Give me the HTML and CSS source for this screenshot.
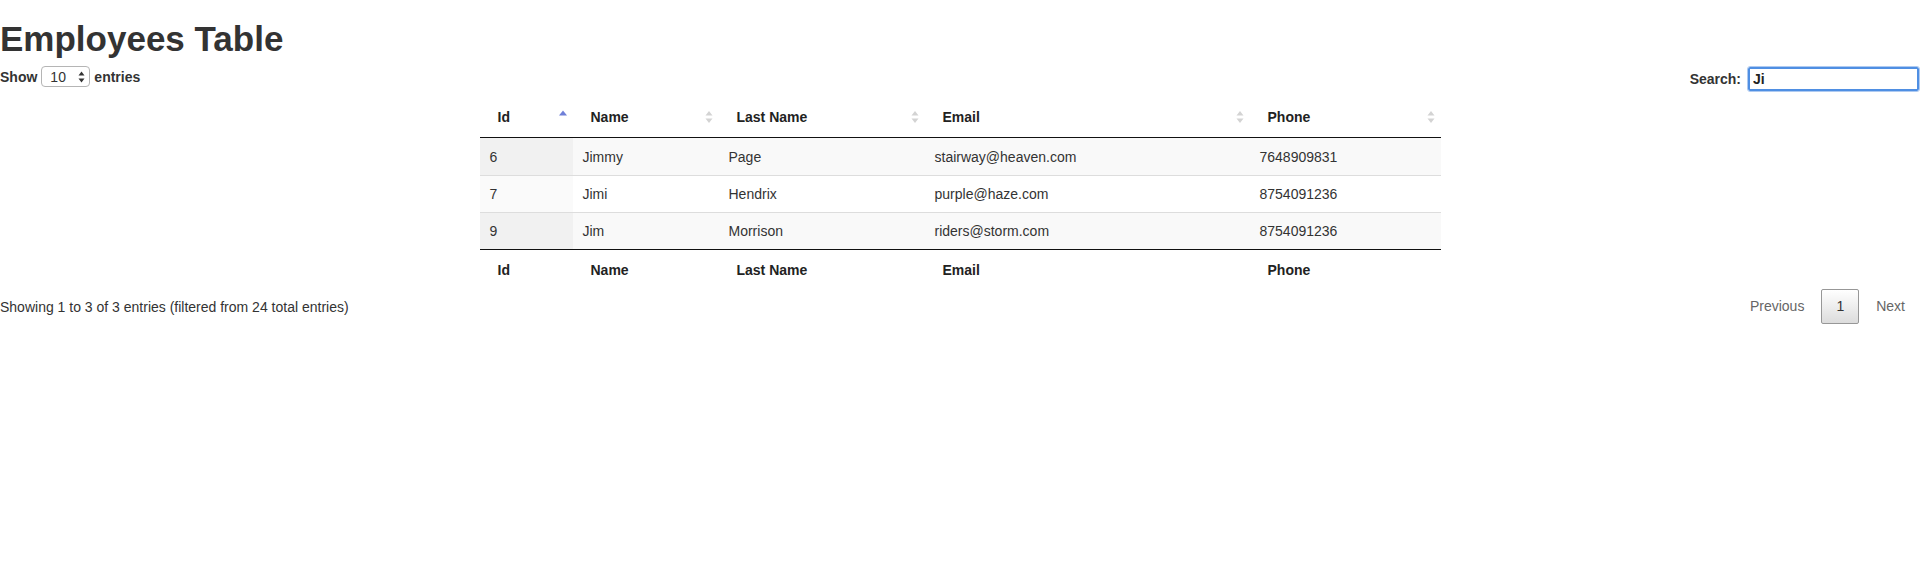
FILE: index.html
```html
<!DOCTYPE html>
<html>
<head>
<meta charset="utf-8">
<title>Employees Table</title>
<link rel="stylesheet" href="styles.css">
</head>
<body>
<h1 class="title">Employees Table</h1>
<div class="controls">
  <div class="length">
    <span>Show</span>
    <span class="select-wrap">
      <select class="select"><option>10</option></select>
      <svg class="select-arrows" width="7" height="12" viewBox="0 0 7 12"><path d="M3.5 0.5 L6.5 4.5 L0.5 4.5 Z M3.5 11.5 L6.5 7.5 L0.5 7.5 Z" fill="#333"/></svg>
    </span>
    <span>entries</span>
  </div>
  <label class="filter">Search: <input class="search" type="text" value="Ji"></label>
</div>
<table class="data">
  <colgroup>
    <col class="c-id"><col class="c-name"><col class="c-last"><col class="c-email"><col class="c-phone">
  </colgroup>
  <thead>
    <tr>
      <th class="sort">Id<svg class="sort-icon" width="8" height="14" viewBox="0 0 8 14"><path d="M4 0.5 L8 5.5 L0 5.5 Z" fill="#6f7fd8"/></svg></th>
      <th class="sort">Name<svg class="sort-icon" width="8" height="14" viewBox="0 0 8 14"><path d="M4 1 L7.5 5.5 L0.5 5.5 Z M4 13 L7.5 8.5 L0.5 8.5 Z" fill="#d3d3d3"/></svg></th>
      <th class="sort">Last Name<svg class="sort-icon" width="8" height="14" viewBox="0 0 8 14"><path d="M4 1 L7.5 5.5 L0.5 5.5 Z M4 13 L7.5 8.5 L0.5 8.5 Z" fill="#d3d3d3"/></svg></th>
      <th class="sort">Email<svg class="sort-icon" width="8" height="14" viewBox="0 0 8 14"><path d="M4 1 L7.5 5.5 L0.5 5.5 Z M4 13 L7.5 8.5 L0.5 8.5 Z" fill="#d3d3d3"/></svg></th>
      <th class="sort">Phone<svg class="sort-icon" width="8" height="14" viewBox="0 0 8 14"><path d="M4 1 L7.5 5.5 L0.5 5.5 Z M4 13 L7.5 8.5 L0.5 8.5 Z" fill="#d3d3d3"/></svg></th>
    </tr>
  </thead>
  <tbody>
    <tr><td class="sorted">6</td><td>Jimmy</td><td>Page</td><td>stairway@heaven.com</td><td>7648909831</td></tr>
    <tr><td class="sorted">7</td><td>Jimi</td><td>Hendrix</td><td>purple@haze.com</td><td>8754091236</td></tr>
    <tr><td class="sorted">9</td><td>Jim</td><td>Morrison</td><td>riders@storm.com</td><td>8754091236</td></tr>
  </tbody>
  <tfoot>
    <tr><th>Id</th><th>Name</th><th>Last Name</th><th>Email</th><th>Phone</th></tr>
  </tfoot>
</table>
<div class="bottom">
  <div class="info">Showing 1 to 3 of 3 entries (filtered from 24 total entries)</div>
  <div class="paginate">
    <span class="page-btn disabled">Previous</span>
    <span class="page-btn current">1</span>
    <span class="page-btn disabled">Next</span>
  </div>
</div>
</body>
</html>
```
FILE: styles.css
```css
html, body {
  margin: 0;
  padding: 0;
  background: #fff;
}
body {
  font-family: "Liberation Sans", Arial, Helvetica, sans-serif;
  font-size: 14px;
  color: #333;
}
.title {
  margin: 19px 0 0;
  font-size: 35px;
  line-height: 39px;
  font-weight: bold;
  color: #333;
}
.controls {
  display: flex;
  justify-content: space-between;
  align-items: flex-start;
  padding-top: 8px;
}
.length {
  display: flex;
  align-items: center;
  gap: 4px;
  height: 21px;
  font-weight: bold;
}
.select-wrap {
  position: relative;
  display: inline-block;
  width: 49px;
  height: 21px;
}
.select {
  appearance: none;
  -webkit-appearance: none;
  box-sizing: border-box;
  width: 49px;
  height: 21px;
  border: 1px solid #b5b5b5;
  border-radius: 4px;
  background: #fff;
  font-family: "Liberation Sans", Arial, sans-serif;
  font-size: 14px;
  color: #333;
  padding: 0 0 0 8px;
  margin: 0;
}
.select-arrows {
  position: absolute;
  right: 5px;
  top: 5px;
}
.filter {
  display: flex;
  align-items: center;
  height: 26px;
  font-weight: bold;
}
.search {
  box-sizing: border-box;
  width: 171px;
  height: 24px;
  margin: 0 1px 0 7px;
  padding: 0 3px;
  border: 2px solid #4f8fe3;
  outline: 1px solid #aecaf1;
  border-radius: 2px;
  font-family: "Liberation Sans", Arial, sans-serif;
  font-size: 14px;
  font-weight: bold;
  color: #222;
}
.data {
  width: 961px;
  margin: 5px auto 0;
  border-collapse: separate;
  border-spacing: 0;
  table-layout: fixed;
}
.c-id { width: 93px; }
.c-name { width: 146px; }
.c-last { width: 206px; }
.c-email { width: 325px; }
.c-phone { width: 191px; }
.data th {
  text-align: left;
  font-weight: bold;
  padding: 10px 18px;
  line-height: 20px;
  color: #222;
}
.data thead th {
  border-bottom: 1px solid #111;
}
.data th.sort {
  position: relative;
}
.sort-icon {
  position: absolute;
  right: 6px;
  top: 13px;
}
.data td {
  padding: 9px 10px;
  line-height: 18px;
  border-top: 1px solid #ddd;
}
.data tbody tr:first-child td {
  border-top: none;
  padding-top: 10px;
}
.data tbody tr:nth-child(odd) td {
  background: #f9f9f9;
}
.data tbody tr:nth-child(odd) td.sorted {
  background: #f1f1f1;
}
.data tbody tr:nth-child(even) td.sorted {
  background: #fafafa;
}
.data tfoot th {
  border-top: 1px solid #111;
}
.bottom {
  display: flex;
  justify-content: space-between;
  align-items: center;
  margin-top: -1px;
}
.info {
  line-height: 20px;
}
.paginate {
  display: flex;
}
.page-btn {
  display: inline-block;
  box-sizing: border-box;
  padding: 7px 14px;
  margin-left: 2px;
  line-height: 19px;
  border: 1px solid transparent;
  border-radius: 2px;
  text-align: center;
}
.page-btn.disabled {
  color: #666;
}
.page-btn.current {
  color: #333;
  border: 1px solid #979797;
  background: linear-gradient(to bottom, #fff 0%, #dcdcdc 100%);
}
```
